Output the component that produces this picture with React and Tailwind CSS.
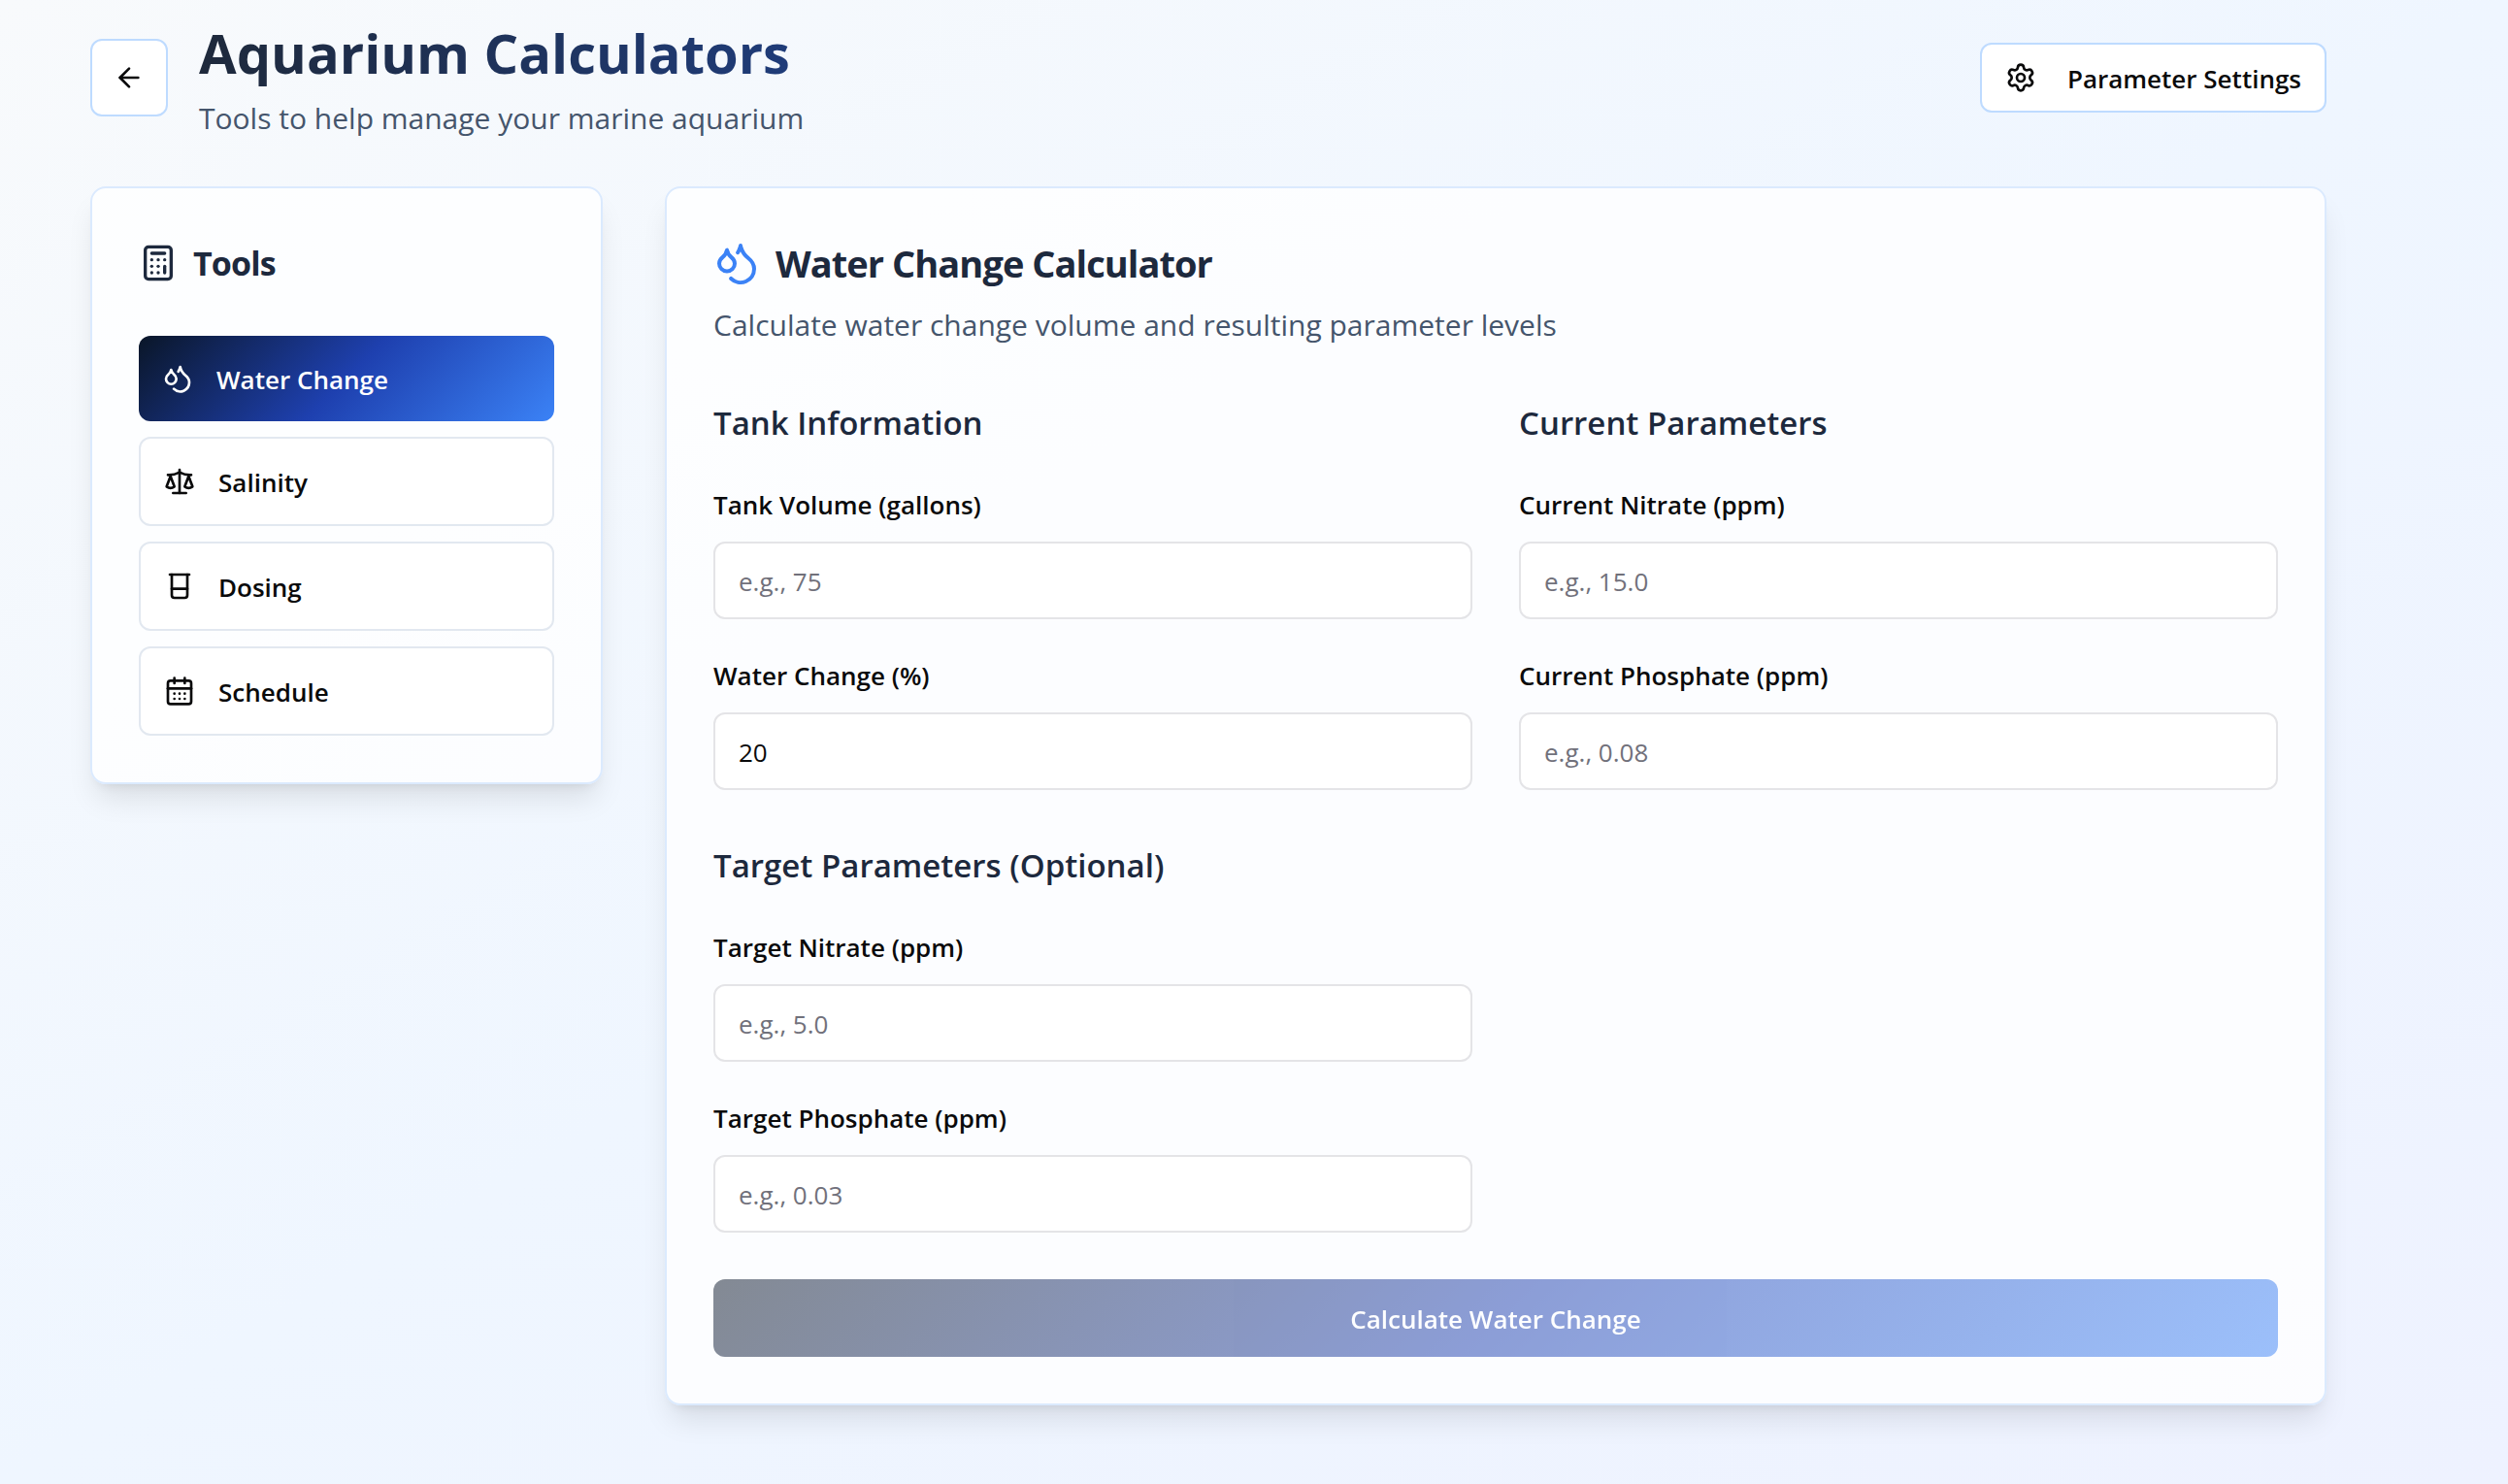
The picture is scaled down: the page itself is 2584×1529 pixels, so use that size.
import { useState } from 'react';
import { ArrowLeft, Beaker, Calculator, CalendarDays, Droplets, Scale, Settings } from 'lucide-react';
import { clsx } from 'clsx';

const tools = [
    { id: 'water-change', label: 'Water Change', icon: Droplets },
    { id: 'salinity', label: 'Salinity', icon: Scale },
    { id: 'dosing', label: 'Dosing', icon: Beaker },
    { id: 'schedule', label: 'Schedule', icon: CalendarDays }
];

const Card = ({ className, children }) => (
    <div
        className={clsx(
            'rounded-2xl border-2 border-blue-100 bg-white/80 p-12 shadow-[0_20px_30px_-6px_rgba(0,0,0,0.1),0_8px_12px_-8px_rgba(0,0,0,0.1)]',
            className
        )}
    >
        {children}
    </div>
);

const Field = ({ id, label, placeholder, value, onChange }) => (
    <div>
        <label htmlFor={id} className="mb-3 block text-[26px] leading-[52px] font-semibold text-[#0a0a0b]">
            {label}
        </label>
        <input
            id={id}
            type="text"
            inputMode="decimal"
            placeholder={placeholder}
            value={value}
            onChange={(e) => onChange(id, e.target.value)}
            className="h-20 w-full rounded-xl border-2 border-zinc-200 bg-white px-6 pt-0.5 text-[26px] text-[#0a0a0b] placeholder:text-zinc-500"
        />
    </div>
);

const Section = ({ title, children }) => (
    <section>
        <h3 className="mb-7 text-[33px] leading-15 font-semibold text-slate-800">{title}</h3>
        <div className="flex flex-col gap-8">{children}</div>
    </section>
);

const App = () => {
    const [activeTool, setActiveTool] = useState('water-change');
    const [form, setForm] = useState({
        tankVolume: '',
        waterChange: '20',
        currentNitrate: '',
        currentPhosphate: '',
        targetNitrate: '',
        targetPhosphate: ''
    });

    const handleChange = (id, value) => {
        setForm({ ...form, [id]: value });
    };

    const canCalculate = form.tankVolume !== '' && form.currentNitrate !== '';

    return (
        <div className="min-h-screen bg-[linear-gradient(to_bottom_right,#f8fafc,#eff6ff,#eef2ff)] pt-4 pr-[187px] pb-20 pl-[93px] font-['Open_Sans','Noto_Sans',sans-serif]">
            <header className="mb-12 flex items-center justify-between">
                <div className="flex items-center gap-8">
                    <button
                        type="button"
                        aria-label="Back"
                        className="flex size-20 items-center justify-center rounded-xl border-2 border-blue-200 bg-white text-[#0a0a0b]"
                    >
                        <ArrowLeft className="size-8" />
                    </button>
                    <div>
                        <h1 className="bg-[linear-gradient(to_right,#1e293b,#1f3c7a)] bg-clip-text text-[56px] leading-[76px] font-bold text-transparent">
                            Aquarium Calculators
                        </h1>
                        <p className="mt-2 text-[30px] leading-11 text-slate-600">
                            Tools to help manage your marine aquarium
                        </p>
                    </div>
                </div>
                <button
                    type="button"
                    className="flex h-18 items-center gap-8 rounded-xl border-2 border-blue-200 bg-white px-6 text-[26px] font-semibold text-[#0a0a0b]"
                >
                    <Settings className="size-8" />
                    <span className="pt-0.5">Parameter Settings</span>
                </button>
            </header>

            <div className="grid grid-cols-4 items-start gap-16">
                <Card>
                    <h2 className="mb-[46px] flex items-center gap-4 text-[34px] leading-[58px] font-bold tracking-tight text-slate-800">
                        <Calculator className="size-10" />
                        Tools
                    </h2>
                    <nav className="flex flex-col gap-4">
                        {tools.map(({ id, label, icon: Icon }) => (
                            <button
                                key={id}
                                type="button"
                                onClick={() => setActiveTool(id)}
                                className={clsx(
                                    'flex items-center gap-6 rounded-xl px-6 text-[26px] font-semibold',
                                    activeTool === id
                                        ? 'h-22 bg-[linear-gradient(135deg,#0a1628_0%,#1e40af_50%,#3b82f6_100%)] text-white'
                                        : 'h-23 border-2 border-slate-200 bg-white text-[#0a0a0b]'
                                )}
                            >
                                <Icon className="size-8" />
                                <span className="pt-0.5">{label}</span>
                            </button>
                        ))}
                    </nav>
                </Card>

                <Card className="col-span-3">
                    <h2 className="flex items-center gap-4 text-[38px] leading-[58px] font-bold tracking-tight text-slate-800">
                        <Droplets className="size-12 text-[#3b82f6]" />
                        Water Change Calculator
                    </h2>
                    <p className="mt-[10px] mb-[46px] text-[30px] leading-[50px] text-slate-600">
                        Calculate water change volume and resulting parameter levels
                    </p>

                    <form onSubmit={(e) => e.preventDefault()}>
                        <div className="grid grid-cols-2 gap-12">
                            <Section title="Tank Information">
                                <Field id="tankVolume" label="Tank Volume (gallons)" placeholder="e.g., 75" value={form.tankVolume} onChange={handleChange} />
                                <Field id="waterChange" label="Water Change (%)" value={form.waterChange} onChange={handleChange} />
                            </Section>
                            <Section title="Current Parameters">
                                <Field id="currentNitrate" label="Current Nitrate (ppm)" placeholder="e.g., 15.0" value={form.currentNitrate} onChange={handleChange} />
                                <Field id="currentPhosphate" label="Current Phosphate (ppm)" placeholder="e.g., 0.08" value={form.currentPhosphate} onChange={handleChange} />
                            </Section>
                            <Section title="Target Parameters (Optional)">
                                <Field id="targetNitrate" label="Target Nitrate (ppm)" placeholder="e.g., 5.0" value={form.targetNitrate} onChange={handleChange} />
                                <Field id="targetPhosphate" label="Target Phosphate (ppm)" placeholder="e.g., 0.03" value={form.targetPhosphate} onChange={handleChange} />
                            </Section>
                        </div>
                        <button
                            type="submit"
                            disabled={!canCalculate}
                            className="mt-12 h-20 w-full rounded-xl bg-[linear-gradient(135deg,#0a1628_0%,#1e40af_50%,#3b82f6_100%)] pt-0.5 text-[26px] font-semibold text-white disabled:opacity-50"
                        >
                            Calculate Water Change
                        </button>
                    </form>
                </Card>
            </div>
        </div>
    );
};

export default App;
